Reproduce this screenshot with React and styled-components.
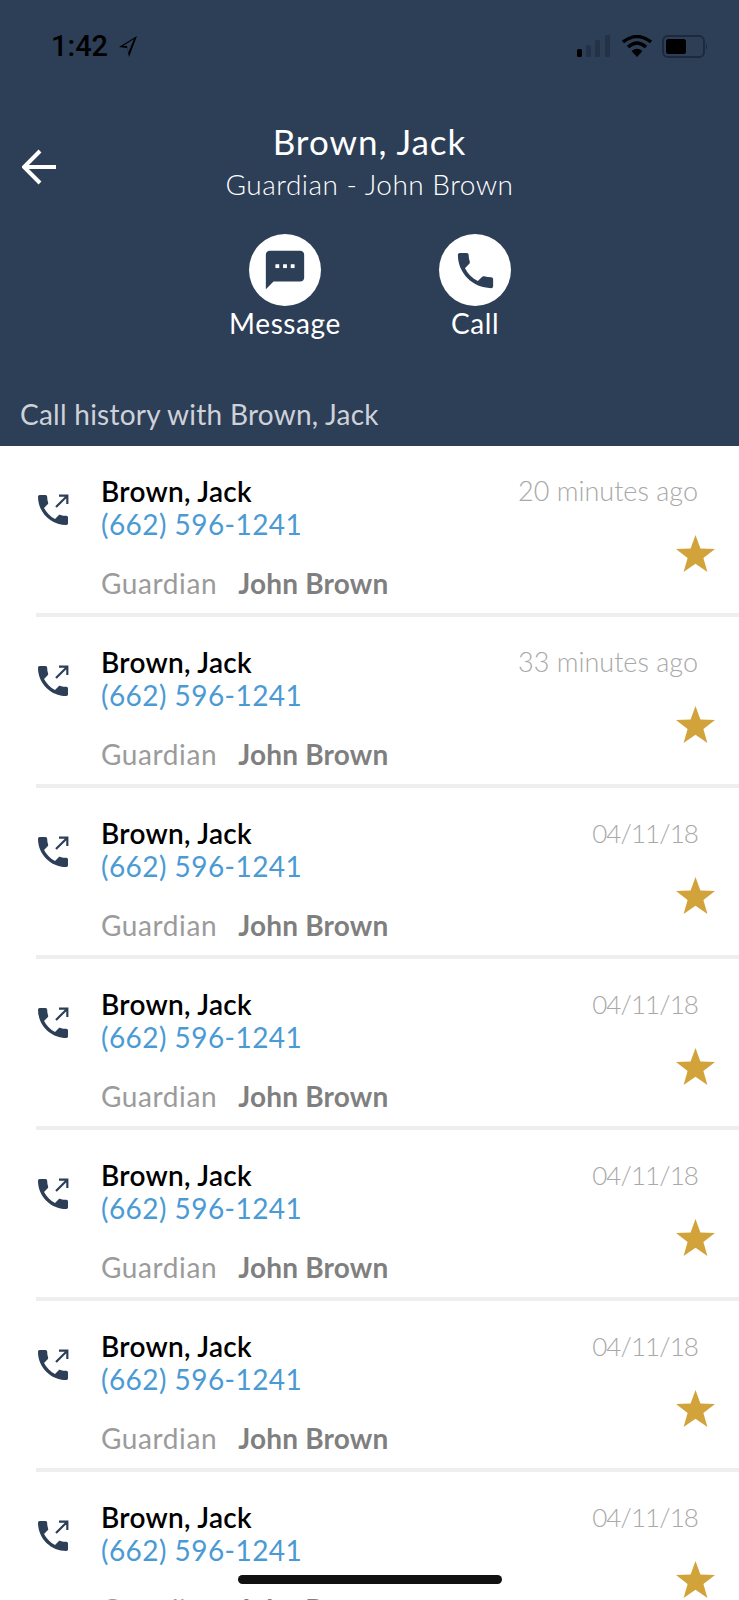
import React from 'react';
import styled, {createGlobalStyle} from 'styled-components';

const calls = [
    {id: 1, when: '20 minutes ago'},
    {id: 2, when: '33 minutes ago'},
    {id: 3, when: '04/11/18', isDate: true},
    {id: 4, when: '04/11/18', isDate: true},
    {id: 5, when: '04/11/18', isDate: true},
    {id: 6, when: '04/11/18', isDate: true},
    {id: 7, when: '04/11/18', isDate: true},
];

const phonePath = 'M6.62 10.79c1.44 2.83 3.76 5.14 6.59 6.59l2.2-2.2c.27-.27.67-.36 1.02-.24 1.12.37 2.33.57 3.57.57.55 0 1 .45 1 1V20c0 .55-.45 1-1 1-9.39 0-17-7.61-17-17 0-.55.45-1 1-1h3.5c.55 0 1 .45 1 1 0 1.25.2 2.45.57 3.57.11.35.03.74-.25 1.02l-2.2 2.2z';

function App() {
    return (
        <Screen>
            <GlobalStyle />
            <Header>
                <StatusBar>
                    <Clock>
                        1:42
                        <svg width="20" height="24" viewBox="0 0 20 24">
                            <path d="M19 2 L1 13 L9 14 L11 23 Z M16 5 L10 19 L9 12 L5 12 Z" fill="#000" fillRule="evenodd" />
                        </svg>
                    </Clock>
                    <StatusIcons>
                        <svg width="36" height="22" viewBox="0 0 36 22">
                            <rect x="1" y="14" width="5" height="8" rx="1.5" fill="#000" />
                            <rect x="10" y="10" width="5" height="12" rx="1.5" fill="#243247" />
                            <rect x="19" y="5" width="5" height="17" rx="1.5" fill="#243247" />
                            <rect x="29" y="0" width="5" height="22" rx="1.5" fill="#243247" />
                        </svg>
                        <svg width="30" height="22" viewBox="0 0 30 22">
                            <path d="M1 7 Q15 -4 29 7" fill="none" stroke="#000" strokeWidth="3.4" />
                            <path d="M6 12 Q15 4 24 12" fill="none" stroke="#000" strokeWidth="3.4" />
                            <path d="M9.5 16 Q15 11.5 20.5 16 L15 22 Z" fill="#000" />
                        </svg>
                        <svg width="46" height="23" viewBox="0 0 46 23">
                            <rect x="1" y="1" width="41" height="21" rx="5" fill="none" stroke="#1d2a3d" strokeWidth="2" />
                            <rect x="4" y="4" width="20" height="15" rx="2.5" fill="#000" />
                            <path d="M44 8 Q46 11.5 44 15 Z" fill="#1d2a3d" />
                        </svg>
                    </StatusIcons>
                </StatusBar>
                <TitleRow>
                    <BackButton>
                        <svg width="36" height="36" viewBox="0 0 36 36">
                            <path d="M34 18 H4 M18 2 L2 18 L18 34" fill="none" stroke="#fff" strokeWidth="4" />
                        </svg>
                    </BackButton>
                    <TitleBlock>
                        <Title>Brown, Jack</Title>
                        <Subtitle>Guardian - John Brown</Subtitle>
                    </TitleBlock>
                </TitleRow>
                <Actions>
                    <Action>
                        <ActionCircle>
                            <svg width="46" height="46" viewBox="0 0 24 24">
                                <path d="M20 2H4c-1.1 0-2 .9-2 2v18l4-4h14c1.1 0 2-.9 2-2V4c0-1.1-.9-2-2-2z" fill="#2d3e57" />
                                <rect x="7" y="9" width="2" height="2" fill="#fff" />
                                <rect x="11" y="9" width="2" height="2" fill="#fff" />
                                <rect x="15" y="9" width="2" height="2" fill="#fff" />
                            </svg>
                        </ActionCircle>
                        <ActionLabel>Message</ActionLabel>
                    </Action>
                    <Action>
                        <ActionCircle>
                            <svg width="47" height="47" viewBox="0 0 24 24">
                                <path d={phonePath} fill="#2d3e57" />
                            </svg>
                        </ActionCircle>
                        <ActionLabel>Call</ActionLabel>
                    </Action>
                </Actions>
                <HistoryTitle>Call history with Brown, Jack</HistoryTitle>
            </Header>
            <CallList>
                {calls.map((call) => (
                    <CallRow key={call.id}>
                        <CallIcon>
                            <svg width="40" height="40" viewBox="0 0 24 24">
                                <path d={phonePath} fill="#2d3e57" />
                                <path d="M13.8 10.2 L20.6 3.4 M15.6 3.4 H20.6 V8.4" fill="none" stroke="#2d3e57" strokeWidth="1.3" />
                            </svg>
                        </CallIcon>
                        <CallText>
                            <Name>Brown, Jack</Name>
                            <Phone>(662) 596-1241</Phone>
                            <Relation>
                                <RelationType>Guardian</RelationType>
                                <RelationName>John Brown</RelationName>
                            </Relation>
                        </CallText>
                        <CallMeta>
                            <When $isDate={call.isDate}>{call.when}</When>
                            <svg width="39" height="37" viewBox="0 0 39 37">
                                <path d="M19.5 0 L24.4 13.6 L39 14 L27.4 23 L31.4 37 L19.5 28.8 L7.6 37 L11.6 23 L0 14 L14.6 13.6 Z" fill="#d1a33a" />
                            </svg>
                        </CallMeta>
                    </CallRow>
                ))}
            </CallList>
            <HomeIndicator />
        </Screen>
    );
}

const GlobalStyle = createGlobalStyle`
    html, body {
        margin: 0;
        padding: 0;
        background: #fff;
    }
`;

const Screen = styled.div`
    position: relative;
    width: 739px;
    height: 1600px;
    overflow: hidden;
    background: #fff;
    font-family: Lato, "Open Sans", sans-serif;
`;

const Header = styled.header`
    height: 446px;
    box-sizing: border-box;
    background: #2d3e57;
    padding-top: 33px;
    color: #fff;
`;

const StatusBar = styled.div`
    display: flex;
    justify-content: space-between;
    align-items: center;
    height: 26px;
    padding: 0 31px 0 51px;
`;

const Clock = styled.div`
    display: flex;
    align-items: center;
    gap: 10px;
    color: #000;
    font-family: Roboto, sans-serif;
    font-size: 29px;
    font-weight: 500;
`;

const StatusIcons = styled.div`
    display: flex;
    align-items: center;
    gap: 10px;
`;

const TitleRow = styled.div`
    display: grid;
    grid-template-columns: 1fr auto 1fr;
    align-items: center;
    margin-top: 61px;
`;

const BackButton = styled.div`
    display: flex;
    padding: 8px 0 0 22px;
`;

const TitleBlock = styled.div`
    text-align: center;
`;

const Title = styled.h1`
    margin: 0;
    font-size: 35px;
    line-height: 42px;
    font-weight: 400;
    letter-spacing: 1px;
`;

const Subtitle = styled.div`
    font-size: 28px;
    line-height: 44px;
    font-weight: 300;
    letter-spacing: 0.5px;
`;

const Actions = styled.div`
    display: grid;
    grid-template-columns: 190px 190px;
    margin: 28px 0 0 190px;
`;

const Action = styled.div`
    display: flex;
    flex-direction: column;
    align-items: center;
`;

const ActionCircle = styled.div`
    display: flex;
    align-items: center;
    justify-content: center;
    width: 72px;
    height: 72px;
    border-radius: 50%;
    background: #fff;
`;

const ActionLabel = styled.div`
    margin-top: -1px;
    font-size: 28px;
    line-height: 36px;
    letter-spacing: 0.6px;
`;

const HistoryTitle = styled.div`
    margin-top: 55px;
    padding-left: 20px;
    font-size: 28px;
    line-height: 36px;
    font-weight: 400;
    letter-spacing: 0.25px;
    color: #cdd2d9;
`;

const CallList = styled.div`
    display: flex;
    flex-direction: column;
`;

const CallRow = styled.div`
    display: grid;
    grid-template-columns: 65px 1fr auto;
    height: 171px;
    box-sizing: border-box;
    margin-left: 36px;
    padding-top: 29px;
    border-bottom: 4px solid #eee;
`;

const CallIcon = styled.div`
    margin-top: 15px;
    svg {
        display: block;
        margin-left: -3px;
    }
`;

const CallText = styled.div`
    display: flex;
    flex-direction: column;
`;

const Name = styled.div`
    font-size: 28px;
    line-height: 32px;
    font-weight: 600;
    letter-spacing: 0.3px;
    color: #000;
`;

const Phone = styled.div`
    margin-top: 1px;
    font-size: 28px;
    line-height: 32px;
    letter-spacing: 0.45px;
    color: #4a9ad4;
`;

const Relation = styled.div`
    display: flex;
    gap: 21px;
    margin-top: 27px;
    font-size: 28px;
    line-height: 32px;
`;

const RelationType = styled.span`
    letter-spacing: 0.6px;
    color: #9b9b9b;
`;

const RelationName = styled.span`
    font-weight: 700;
    letter-spacing: 0.2px;
    color: #7f7f7f;
`;

const CallMeta = styled.div`
    display: flex;
    flex-direction: column;
    align-items: flex-end;
    gap: 29px;
    padding: 1px 24px 0 0;
    svg {
        display: block;
    }
`;

const When = styled.div`
    margin-right: 17px;
    font-size: ${(props) => (props.$isDate ? '26px' : '27px')};
    line-height: 30px;
    font-weight: 300;
    letter-spacing: ${(props) => (props.$isDate ? '-0.9px' : '0')};
    color: #a8a8a8;
`;

const HomeIndicator = styled.div`
    position: absolute;
    left: 238px;
    top: 1575px;
    width: 264px;
    height: 9px;
    border-radius: 5px;
    background: #111;
`;

export default App;
